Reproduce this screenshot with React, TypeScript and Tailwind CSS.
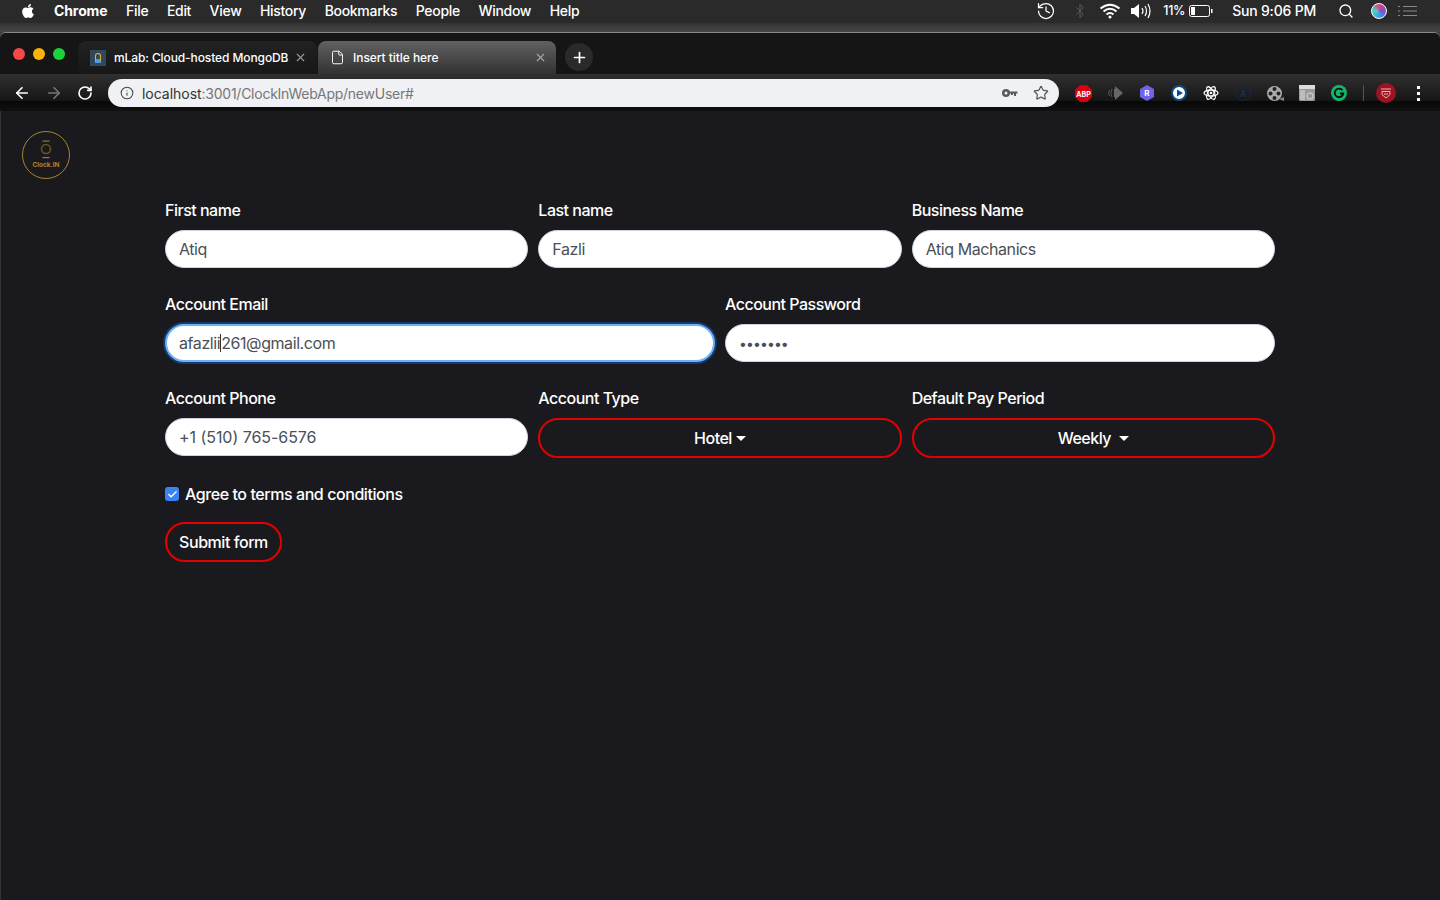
import React from "react";
import { FaApple } from "react-icons/fa";
import { History, Bluetooth, Search, ArrowLeft, ArrowRight, RotateCw, Info, Star, X, Plus, File, Check } from "lucide-react";

const menus = ["File", "Edit", "View", "History", "Bookmarks", "People", "Window", "Help"];

function MenuBar() {
  return (
    <div className="h-[23px] pb-[2px] bg-[#2a2a2b] flex items-center text-white text-[14px] font-medium tracking-[-0.3px]">
      <div className="w-[54px] pl-[20px] flex items-center"><FaApple size={16} /></div>
      <div className="flex gap-[18.500px] items-center">
        <span className="font-bold tracking-[-0.1px]">Chrome</span>
        {menus.map((m) => <span key={m}>{m}</span>)}
      </div>
      <div className="ml-auto flex items-center">
        <History size={20} strokeWidth={1.5} />
        <Bluetooth size={16} strokeWidth={1.5} className="ml-[16px] text-[#5a5a5a]" />
        <svg width="22" height="16" viewBox="0 0 22 16" className="ml-[11px]" fill="none" stroke="#fff" strokeWidth="2">
          <path d="M1.500 5.500Q11 -2 20.500 5.500" />
          <path d="M4.500 8.500Q11 3 17.500 8.500" />
          <path d="M7.500 11.500Q11 8.500 14.500 11.500" />
          <circle cx="11" cy="14" r="1.500" fill="#fff" stroke="none" />
        </svg>
        <svg width="22" height="16" viewBox="0 0 22 16" className="ml-[9px]" fill="none" stroke="#fff" strokeWidth="1.200">
          <path d="M1 5h3l5-4v14l-5-4H1z" fill="#fff" stroke="none" />
          <path d="M12 5Q14 8 12 11" />
          <path d="M15 3Q18 8 15 13" />
          <path d="M18 1Q22 8 18 15" />
        </svg>
        <span className="ml-[11px] mt-[2px] text-[12.500px]">11%</span>
        <svg width="24" height="12" viewBox="0 0 24 12" className="ml-[4px]">
          <rect x="0.500" y="0.500" width="20" height="11" rx="2" fill="none" stroke="#fff" />
          <rect x="2" y="2" width="4" height="8" fill="#fff" />
          <rect x="22" y="4" width="1.500" height="4" fill="#fff" />
        </svg>
        <span className="ml-[19px] tracking-[-0.2px]">Sun 9:06 PM</span>
        <Search size={16} strokeWidth={2} className="ml-[22px]" />
        <div className="ml-[17px] w-4 h-4 rounded-full border border-white bg-[conic-gradient(#e0407f,#7a4fd8,#3aa0e8,#47d6c8,#e0407f)]" />
        <svg width="20" height="12" viewBox="0 0 20 12" className="ml-[11px] mr-[22px]" stroke="#8a8a8a" strokeWidth="1.200">
          <path d="M0 1.500h2M5 1.500h14M0 6h2M5 6h14M0 10.500h2M5 10.500h14" />
        </svg>
      </div>
    </div>
  );
}

function TabStrip() {
  return (
    <div className="h-[42px] flex items-end bg-[#151515] rounded-t-[6px] border-t border-[#8a8a8a]">
      <div className="w-[78px] h-[40px] pl-[13px] flex items-center gap-[8px]">
        <span className="w-3 h-3 rounded-full bg-[#f6484a]" />
        <span className="w-3 h-3 rounded-full bg-[#fdb40a]" />
        <span className="w-3 h-3 rounded-full bg-[#1ed13c]" />
      </div>
      <div className="w-[239px] h-[33px] rounded-t-[8px] bg-gradient-to-b from-[#222] to-[#171717] flex items-center pl-[12px] pr-[10px] text-white text-[12px] font-medium tracking-[-0.1px]">
        <span className="w-4 h-4 bg-[#33475a] flex items-center justify-center mr-[8px]">
          <span className="w-[6px] h-[10px] rounded-t-[3px] border border-b-[4px] border-[#e5b13a] border-b-[#4a9be0]" />
        </span>
        <span className="whitespace-nowrap">mLab: Cloud-hosted MongoDB</span>
        <X size={13} className="ml-auto text-[#9a9a9a]" />
      </div>
      <div className="ml-px w-[238px] h-[33px] rounded-t-[8px] bg-gradient-to-b from-[#626262] to-[#323232] flex items-center pl-[12px] pr-[9px] text-white text-[12px] font-medium tracking-[-0.05px]">
        <File size={15} strokeWidth={1.500} className="mr-[8px]" />
        <span>Insert title here</span>
        <X size={13} className="ml-auto text-[#a8a8a8]" />
      </div>
      <div className="ml-[9px] mb-[3px] w-[28px] h-[28px] rounded-full bg-[#2a2a2a] flex items-center justify-center text-white">
        <Plus size={17} strokeWidth={2.400} />
      </div>
    </div>
  );
}

function Ext({ children }: { children: React.ReactNode }) {
  return <span className="w-8 h-[28px] flex items-center justify-center">{children}</span>;
}

function Toolbar() {
  return (
    <div className="h-[37px] pt-[5px] bg-[linear-gradient(#303030_0,#161616_72%,#080808_73%,#101010_100%)] flex items-start">
      <div className="w-[108px] h-[28px] pl-[13px] flex items-center gap-[14px] text-white">
        <ArrowLeft size={18} strokeWidth={2.200} />
        <ArrowRight size={18} strokeWidth={2.200} className="text-[#777]" />
        <RotateCw size={16} strokeWidth={2.400} />
      </div>
      <div className="w-[951px] h-[28px] rounded-full bg-[#f0f1f4] flex items-center pl-[12px] pr-[10px] text-[14px]">
        <Info size={14} strokeWidth={1.800} className="text-[#444] mr-[8px]" />
        <span className="text-[#333] tracking-[-0.03px]">localhost</span>
        <span className="text-[#777] tracking-[-0.25px]">:3001/ClockInWebApp/newUser#</span>
        <svg width="16" height="8" viewBox="0 0 16 8" className="ml-auto mr-[15px]" fill="#5a5a5a">
          <circle cx="4" cy="4" r="4" />
          <circle cx="4" cy="4" r="1.500" fill="#f0f1f4" />
          <path d="M6 2.500h9.500v2h-1.500v2.500h-2v-2.500h-1v1.500h-2v-1.500h-3z" />
        </svg>
        <Star size={16} strokeWidth={1.800} className="text-[#555]" />
      </div>
      <div className="ml-[8px] flex items-center h-[28px]">
        <Ext>
          <svg width="17" height="17" viewBox="0 0 17 17">
            <path d="M5 0h7l5 5v7l-5 5H5l-5-5V5z" fill="#d80010" />
            <text x="8.500" y="11.500" textAnchor="middle" fontSize="7" fontWeight="700" fill="#fff" fontFamily="Inter, sans-serif">ABP</text>
          </svg>
        </Ext>
        <Ext>
          <svg width="18" height="16" viewBox="0 0 18 16">
            <path d="M9 1l8 7-8 7z" fill="#666" />
            <rect x="8" y="4" width="3" height="8" fill="#666" />
            <path d="M6 4Q3.500 8 6 12M3.500 5Q1.500 8 3.500 11" stroke="#555" fill="none" />
          </svg>
        </Ext>
        <Ext>
          <svg width="16" height="16" viewBox="0 0 16 16">
            <path d="M8 0l7 4v8l-7 4-7-4V4z" fill="#6f63e8" />
            <text x="8" y="11" textAnchor="middle" fontSize="8" fill="#fff" fontWeight="700" fontFamily="Inter, sans-serif">R</text>
          </svg>
        </Ext>
        <Ext>
          <svg width="16" height="16" viewBox="0 0 16 16">
            <circle cx="8" cy="8" r="7" fill="#fff" stroke="#0b4c8c" strokeWidth="2" />
            <path d="M6 4.500l6 3.500-6 3.500z" fill="#0b4c8c" />
          </svg>
        </Ext>
        <Ext>
          <svg width="16" height="16" viewBox="0 0 16 16" fill="none" stroke="#fff" strokeWidth="1.300">
            <ellipse cx="8" cy="8" rx="7" ry="3" />
            <ellipse cx="8" cy="8" rx="7" ry="3" transform="rotate(60 8 8)" />
            <ellipse cx="8" cy="8" rx="7" ry="3" transform="rotate(120 8 8)" />
            <circle cx="8" cy="8" r="1.300" fill="#fff" stroke="none" />
          </svg>
        </Ext>
        <Ext>
          <svg width="16" height="16" viewBox="0 0 16 16">
            <circle cx="8" cy="8" r="7.500" fill="none" stroke="#15294a" />
            <text x="8" y="11.500" textAnchor="middle" fontSize="9" fill="#1c3763" fontFamily="Inter, sans-serif">A</text>
          </svg>
        </Ext>
        <Ext>
          <svg width="17" height="17" viewBox="0 0 17 17">
            <circle cx="7.500" cy="8.500" r="7.500" fill="#aaa" />
            <circle cx="7.500" cy="4" r="2" fill="#222" />
            <circle cx="7.500" cy="13" r="2" fill="#222" />
            <circle cx="3.500" cy="8.500" r="2" fill="#222" />
            <circle cx="11.500" cy="8.500" r="2" fill="#222" />
            <path d="M12 14l5 2v-4z" fill="#888" />
          </svg>
        </Ext>
        <Ext>
          <svg width="16" height="16" viewBox="0 0 16 16">
            <rect width="16" height="16" rx="1.500" fill="#9a9a9a" />
            <rect width="16" height="4" fill="#dcdcdc" />
            <rect x="1" y="5" width="5" height="10" fill="#bdbdbd" />
            <circle cx="11" cy="11" r="3" fill="none" stroke="#c4c4c4" strokeWidth="1.500" />
          </svg>
        </Ext>
        <Ext>
          <svg width="16" height="16" viewBox="0 0 16 16">
            <circle cx="8" cy="8" r="8" fill="#12b76a" />
            <path d="M11.500 5.300A4.300 4.300 0 1 0 12.300 8.500H9" fill="none" stroke="#0a0f0c" strokeWidth="1.800" />
          </svg>
        </Ext>
        <span className="w-px h-[16px] bg-[#555] ml-[8px] mr-[12px]" />
        <span className="w-5 h-5 rounded-full bg-[#9b1420] flex items-center justify-center">
          <svg width="12" height="11" viewBox="0 0 12 11" fill="none" stroke="#e8b8b8" strokeWidth="1">
            <path d="M1 1h10M2 3.500h8M2 3.500v3l4 3.500 4-3.500v-3M4 6h4" />
          </svg>
        </span>
        <span className="ml-[21px] flex flex-col gap-[3px]">
          <span className="w-[3px] h-[3px] bg-white" />
          <span className="w-[3px] h-[3px] bg-white" />
          <span className="w-[3px] h-[3px] bg-white" />
        </span>
      </div>
    </div>
  );
}

const labelCls = "text-white text-[16px] leading-6 mb-2 font-medium tracking-[-0.5px]";

function Field({ label, children, focused, track }: { label: string; children: React.ReactNode; focused?: boolean; track?: string }) {
  return (
    <div>
      <div className={labelCls}>{label}</div>
      <div className={`h-[38px] rounded-full bg-white flex items-center px-[13px] text-[16px] text-[#495057] ${track ?? "tracking-[-0.42px]"} ${focused ? "border-2 border-[#6cb0f5] ring-[2px] ring-[#173a70] pl-[12px]" : "border border-[#ced4da]"}`}>
        {children}
      </div>
    </div>
  );
}

function Dropdown({ label, value, gap }: { label: string; value: string; gap: string }) {
  return (
    <div>
      <div className={labelCls}>{label}</div>
      <div className="h-[40px] rounded-full border-2 border-[#e30000] flex items-center justify-center text-white text-[16px] font-medium tracking-[-0.5px]">
        <span className={gap}>{value}</span>
        <span className="w-0 h-0 border-x-[5px] border-x-transparent border-t-[5px] border-t-white" />
      </div>
    </div>
  );
}

function Logo() {
  return (
    <svg width="48" height="48" viewBox="0 0 48 48" className="block">
      <circle cx="24" cy="24" r="23.500" fill="none" stroke="#a8842c" strokeWidth="1" />
      <rect x="20.500" y="9.500" width="7" height="1.200" fill="#a07b28" />
      <rect x="20.500" y="26" width="7" height="1.200" fill="#a07b28" />
      <circle cx="24" cy="18" r="4.500" fill="none" stroke="#6e5520" strokeWidth="1.500" />
      <text x="24" y="35.500" textAnchor="middle" fontSize="6.500" fontWeight="700" fill="#a8842c" fontFamily="Inter, sans-serif">Clock.IN</text>
    </svg>
  );
}

export default function App() {
  return (
    <div className="w-[1440px] h-[900px] overflow-hidden bg-[#3e3e3e] font-['Inter',sans-serif]">
      <MenuBar />
      <div className="h-[9px] bg-gradient-to-b from-[#333] to-[#484848]" />
      <TabStrip />
      <Toolbar />
      <main className="h-[789px] bg-[#1a1a1e] shadow-[inset_1px_0_0_#333] flex flex-col">
        <div className="pl-[22px] pt-[20px] h-[87px]"><Logo /></div>
        <form className="ml-[165px] w-[1110px]">
          <div className="grid grid-cols-3 gap-[10px] mb-[24px]">
            <Field label="First name">Atiq</Field>
            <Field label="Last name">Fazli</Field>
            <Field label="Business Name">Atiq Machanics</Field>
          </div>
          <div className="grid grid-cols-2 gap-[10px] mb-[24px]">
            <Field focused label="Account Email">
              <span>afazlii</span>
              <span className="w-px h-[18px] bg-[#333]" />
              <span>261@gmail.com</span>
            </Field>
            <Field label="Account Password" track="tracking-[-0.9px]"><span className="text-[14px]">•••••••</span></Field>
          </div>
          <div className="grid grid-cols-3 gap-[10px] mb-[24px]">
            <Field label="Account Phone" track="tracking-[-0.05px]">+1 (510) 765-6576</Field>
            <Dropdown label="Account Type" value="Hotel" gap="mr-[4px]" />
            <Dropdown label="Default Pay Period" value="Weekly" gap="mr-[8px]" />
          </div>
          <div className="flex items-center h-6 text-white text-[16px] font-medium tracking-[-0.43px]">
            <span className="w-[14px] h-[14px] rounded-[3px] bg-[#3b82f6] flex items-center justify-center mr-[6px]"><Check size={11} strokeWidth={3} /></span>
            Agree to terms and conditions
          </div>
          <button type="button" className="mt-[16px] h-[40px] w-[117px] rounded-full border-2 border-[#e30000] text-white text-[16px] font-medium tracking-[-0.45px]">Submit form</button>
        </form>
      </main>
    </div>
  );
}
